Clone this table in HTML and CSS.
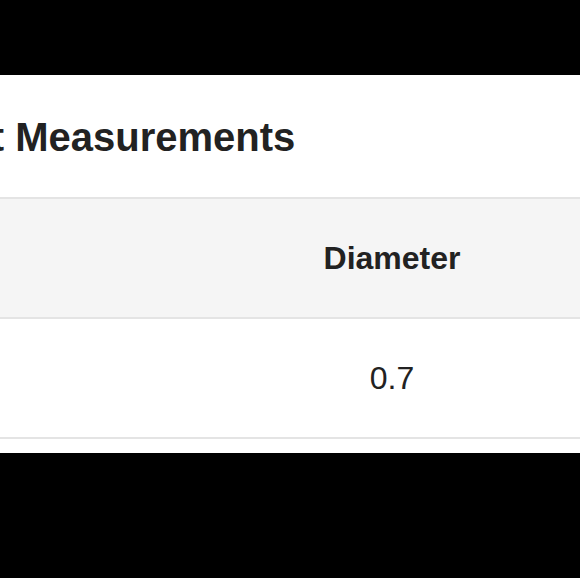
FILE: index.html
```html
<!DOCTYPE html>
<html>
<head>
<meta charset="utf-8">
<link rel="stylesheet" href="styles.css">
</head>
<body>
<section class="panel">
  <div class="inner">
    <h2 class="title">Product Measurements</h2>
    <div class="table">
      <div class="tr head">
        <div class="cell name">Size</div>
        <div class="cell">Diameter</div>
      </div>
      <div class="tr">
        <div class="cell name">One Size</div>
        <div class="cell">0.7</div>
      </div>
    </div>
  </div>
</section>
</body>
</html>
```
FILE: styles.css
```css
html, body {
  margin: 0;
  padding: 0;
  background: #000;
  overflow: hidden;
  width: 580px;
  height: 578px;
}
.panel {
  margin-top: 75px;
  height: 378px;
  background: #fff;
  padding-top: 42px;
  box-sizing: border-box;
  overflow: hidden;
  font-family: "Liberation Sans", Arial, sans-serif;
  color: #222;
}
.inner {
  margin-left: -147px;
  width: 1100px;
}
.title {
  margin: 0 0 40px;
  font-size: 40px;
  line-height: 40px;
  font-weight: 700;
  white-space: nowrap;
}
.tr {
  display: grid;
  grid-template-columns: 439px 200px 1fr;
  height: 118px;
  border-bottom: 2px solid #e4e4e4;
  font-size: 32px;
}
.tr.head {
  border-top: 2px solid #e4e4e4;
  background: #f5f5f5;
  font-weight: 700;
}
.cell {
  display: flex;
  align-items: center;
  justify-content: center;
  white-space: nowrap;
}
.cell.name {
  visibility: hidden;
}
```
